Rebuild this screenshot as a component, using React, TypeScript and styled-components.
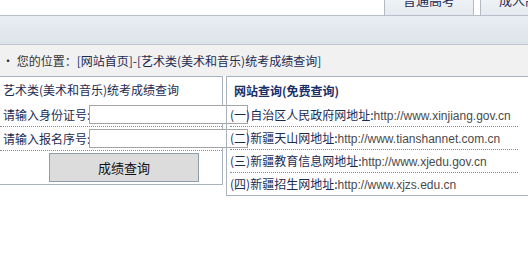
import styled, { createGlobalStyle } from "styled-components";

const GlobalStyle = createGlobalStyle`
  html, body {
    margin: 0;
    padding: 0;
    background: #fff;
    overflow: hidden;
  }
  body {
    font-family: "Noto Sans CJK SC", "Liberation Sans", sans-serif;
    font-size: 12px;
    color: #1c2b52;
  }
`;

const Page = styled.div`
  width: 528px;
  height: 262px;
  overflow: hidden;
`;

const TopBar = styled.div`
  height: 15px;
  border-bottom: 1px solid #b7bec8;
  display: flex;
  align-items: flex-end;
  gap: 6px;
  padding-left: 384px;
  overflow: hidden;
`;

const Tab = styled.div`
  flex: 0 0 auto;
  width: 90px;
  height: 26px;
  box-sizing: border-box;
  border: 1px solid #b3bac4;
  border-bottom: none;
  background: linear-gradient(#f4f6f9, #e6eaf0);
  color: #1c2b52;
  font-size: 13px;
  line-height: 20px;
  text-align: center;
`;

const Band = styled.div`
  height: 28px;
  background: linear-gradient(#e9edf3, #dde3eb);
  border-bottom: 1px solid #c3c8ce;
`;

const Crumbs = styled.div`
  height: 31px;
  background: #f1f1f1;
  display: flex;
  align-items: center;
  padding-left: 2px;
  color: #333;
  white-space: nowrap;
`;

const CrumbLink = styled.span`
  color: #1c2b52;
`;

const Panels = styled.div`
  display: flex;
  align-items: flex-start;
`;

const LeftBox = styled.div`
  width: 224px;
  margin-left: -1px;
  box-sizing: border-box;
  border: 1px solid #a9b3be;
  flex: 0 0 auto;
`;

const RightBox = styled.div`
  width: 320px;
  margin-left: 3px;
  box-sizing: border-box;
  border: 1px solid #a9b3be;
  flex: 0 0 auto;
`;

const LeftTitle = styled.div`
  height: 26px;
  line-height: 26px;
  padding-left: 3px;
  white-space: nowrap;
`;

const FormRow = styled.div`
  height: 23px;
  border-bottom: 1px dotted #8a8a8a;
  display: flex;
  align-items: center;
  padding-left: 3px;
  white-space: nowrap;
`;

const Label = styled.span`
  width: 86px;
  flex: 0 0 auto;
`;

const Field = styled.input`
  flex: 0 0 auto;
  width: 159px;
  height: 19px;
  box-sizing: border-box;
  border: 1px solid #a5a5a5;
  background: #fff;
  padding: 0 2px;
  margin: 0;
  font-size: 12px;
  outline: none;
`;

const ButtonRow = styled.div`
  padding: 2px 0 2px 49px;
`;

const Submit = styled.button`
  display: block;
  width: 150px;
  height: 29px;
  margin: 0;
  border: 1px solid #8e9dac;
  background: #dcdcdc;
  color: #111;
  font-family: "Noto Sans CJK SC", sans-serif;
  font-size: 13px;
  padding: 0;
`;

const RightTitle = styled.div`
  height: 27px;
  line-height: 27px;
  padding-left: 7px;
  font-weight: bold;
  color: #1a2f66;
  white-space: nowrap;
`;

const LinkList = styled.div`
  width: 288px;
  padding-left: 3px;
`;

const LinkRow = styled.div<{ $last?: boolean }>`
  height: 22px;
  line-height: 22px;
  border-bottom: ${(p) => (p.$last ? "none" : "1px dotted #8a8a8a")};
  white-space: nowrap;
  color: #1c2b52;
`;

const Url = styled.span`
  font-family: "Liberation Sans", Arial, sans-serif;
  color: #4a4a4a;
`;

const sites = [
  { n: "(一)", name: "自治区人民政府网地址", url: "http://www.xinjiang.gov.cn" },
  { n: "(二)", name: "新疆天山网地址", url: "http://www.tianshannet.com.cn" },
  { n: "(三)", name: "新疆教育信息网地址", url: "http://www.xjedu.gov.cn" },
  { n: "(四)", name: "新疆招生网地址", url: "http://www.xjzs.edu.cn" },
];

export default function App() {
  return (
    <Page>
      <GlobalStyle />
      <TopBar>
        <Tab>普通高考</Tab>
        <Tab>成人高考</Tab>
      </TopBar>
      <Band />
      <Crumbs>
        ·&nbsp;您的位置：<CrumbLink>[网站首页]-[艺术类(美术和音乐)统考成绩查询]</CrumbLink>
      </Crumbs>
      <Panels>
        <LeftBox>
          <LeftTitle>艺术类(美术和音乐)统考成绩查询</LeftTitle>
          <FormRow>
            <Label>请输入身份证号:</Label>
            <Field type="text" />
          </FormRow>
          <FormRow>
            <Label>请输入报名序号:</Label>
            <Field type="text" />
          </FormRow>
          <ButtonRow>
            <Submit>成绩查询</Submit>
          </ButtonRow>
        </LeftBox>
        <RightBox>
          <RightTitle>网站查询(免费查询)</RightTitle>
          <LinkList>
            {sites.map((s, i) => (
              <LinkRow key={s.n} $last={i === sites.length - 1}>
                {s.n}
                {s.name}:<Url>{s.url}</Url>
              </LinkRow>
            ))}
          </LinkList>
        </RightBox>
      </Panels>
    </Page>
  );
}
